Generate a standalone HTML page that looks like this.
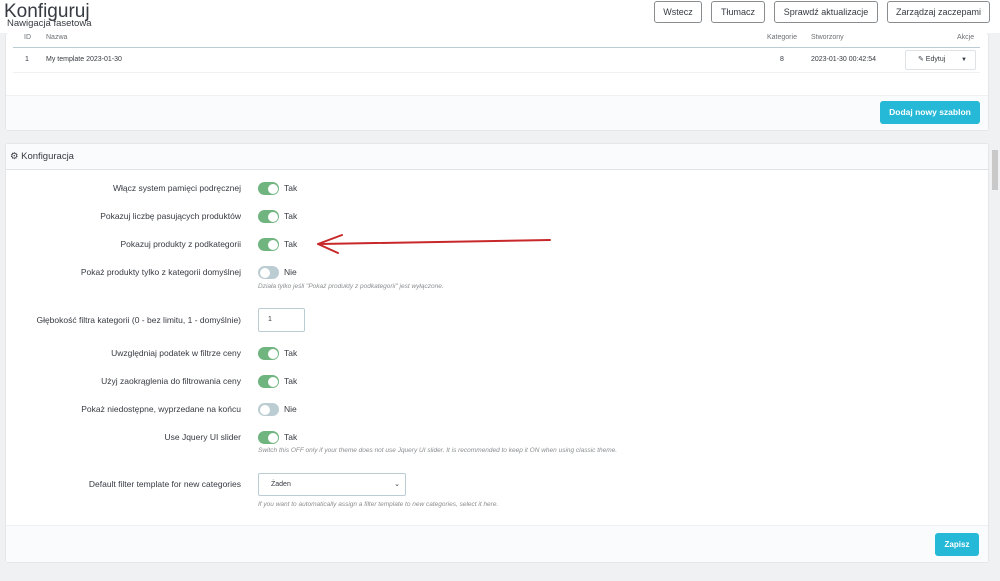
<!DOCTYPE html>
<html><head><meta charset="utf-8"><style>
*{box-sizing:border-box;margin:0;padding:0}
body{width:1000px;height:581px;background:#eff1f2;font-family:"Liberation Sans",sans-serif;color:#363a41;position:relative;overflow:hidden;font-size:8px}
.abs{position:absolute}
.hdr{left:0;top:0;width:1000px;height:33px;background:#fff}
.btn{position:absolute;top:1px;height:22px;border:1px solid #8a8d90;border-radius:3px;background:#fff;font-size:9px;color:#363a41;text-align:center;line-height:20px}
.panel{background:#fff;border:1px solid #e4e6e8;border-radius:3px;position:absolute}
.lbl{position:absolute;right:759px;font-size:8.5px;color:#363a41;white-space:nowrap}
.tg{position:absolute;left:258px;width:21px;height:13px;border-radius:7px;background:#70b580}
.tg::after{content:"";position:absolute;top:1.5px;right:1.5px;width:10px;height:10px;border-radius:50%;background:#fff}
.tg.off{background:#bbcdd2}
.tg.off::after{left:1.5px;right:auto}
.tv{position:absolute;left:284px;font-size:8.5px}
.help{position:absolute;left:258px;font-size:6.5px;font-style:italic;color:#8a8d90;white-space:nowrap}
.th{position:absolute;top:34px;font-size:7px;color:#6c6f73}
</style></head><body>
<div class="abs hdr"></div>
<div class="abs" style="left:4px;top:1px;font-size:19px;color:#363a41">Konfiguruj</div>
<div class="abs" style="left:7px;top:18px;font-size:9.5px;color:#363a41">Nawigacja fasetowa</div>
<div class="btn" style="left:654px;width:48px">Wstecz</div>
<div class="btn" style="left:711px;width:54px">Tłumacz</div>
<div class="btn" style="left:774px;width:104px">Sprawdź aktualizacje</div>
<div class="btn" style="left:887px;width:103px">Zarządzaj zaczepami</div>

<div class="panel" style="left:5px;top:33px;width:984px;height:98px;border-top:none"></div>
<div class="abs" style="left:6px;top:95px;width:982px;height:35px;background:#fafbfc;border-top:1px solid #eef0f1"></div>
<div class="th" style="left:24px">ID</div>
<div class="th" style="left:46px">Nazwa</div>
<div class="th" style="left:767px">Kategorie</div>
<div class="th" style="left:811px">Stworzony</div>
<div class="th" style="left:957px">Akcje</div>
<div class="abs" style="left:13px;top:47px;width:967px;height:1px;background:#bbcdd2"></div>
<div class="abs" style="left:25px;top:56px;font-size:7px">1</div>
<div class="abs" style="left:46px;top:56px;font-size:7px">My template 2023-01-30</div>
<div class="abs" style="left:780px;top:56px;font-size:7px">8</div>
<div class="abs" style="left:811px;top:56px;font-size:7px">2023-01-30 00:42:54</div>
<div class="abs" style="left:905px;top:50px;width:71px;height:20px;border:1px solid #dfe3e5;border-radius:2px;background:#fff;font-size:7px;line-height:18px;padding-left:12px">✎ Edytuj <span style="position:absolute;right:8px;font-size:6px">▼</span></div>
<div class="abs" style="left:13px;top:72px;width:967px;height:1px;background:#eef0f1"></div>
<div class="abs" style="left:880px;top:101px;width:100px;height:23px;background:#25b9d7;border-radius:3px;color:#fff;font-size:8.5px;font-weight:bold;text-align:center;line-height:23px">Dodaj nowy szablon</div>

<div class="panel" style="left:5px;top:143px;width:984px;height:420px"></div>
<div class="abs" style="left:6px;top:144px;width:982px;height:26px;background:#fafbfc;border-bottom:1px solid #dfe3e5"></div>
<div class="abs" style="left:10px;top:151px;font-size:9.5px">⚙ Konfiguracja</div>
<div class="abs" style="left:992px;top:150px;width:6px;height:40px;background:#c9c9c9"></div>

<div class="lbl" style="top:183px">Włącz system pamięci podręcznej</div><div class="tg" style="top:182px"></div><div class="tv" style="top:183px">Tak</div>
<div class="lbl" style="top:211px">Pokazuj liczbę pasujących produktów</div><div class="tg" style="top:210px"></div><div class="tv" style="top:211px">Tak</div>
<div class="lbl" style="top:239px">Pokazuj produkty z podkategorii</div><div class="tg" style="top:238px"></div><div class="tv" style="top:239px">Tak</div>
<div class="lbl" style="top:267px">Pokaż produkty tylko z kategorii domyślnej</div><div class="tg off" style="top:266px"></div><div class="tv" style="top:267px">Nie</div>
<div class="help" style="top:283px">Działa tylko jeśli "Pokaż produkty z podkategorii" jest wyłączone.</div>
<div class="lbl" style="top:315px">Głębokość filtra kategorii (0 - bez limitu, 1 - domyślnie)</div>
<div class="abs" style="left:258px;top:308px;width:47px;height:24px;border:1px solid #bbcdd2;border-radius:2px;font-size:7px;padding:7px 0 0 9px">1</div>
<div class="lbl" style="top:348px">Uwzględniaj podatek w filtrze ceny</div><div class="tg" style="top:347px"></div><div class="tv" style="top:348px">Tak</div>
<div class="lbl" style="top:376px">Użyj zaokrąglenia do filtrowania ceny</div><div class="tg" style="top:375px"></div><div class="tv" style="top:376px">Tak</div>
<div class="lbl" style="top:404px">Pokaż niedostępne, wyprzedane na końcu</div><div class="tg off" style="top:403px"></div><div class="tv" style="top:404px">Nie</div>
<div class="lbl" style="top:432px">Use Jquery UI slider</div><div class="tg" style="top:431px"></div><div class="tv" style="top:432px">Tak</div>
<div class="help" style="top:447px">Switch this OFF only if your theme does not use Jquery UI slider. It is recommended to keep it ON when using classic theme.</div>
<div class="lbl" style="top:479px">Default filter template for new categories</div>
<div class="abs" style="left:258px;top:473px;width:148px;height:23px;border:1px solid #bbcdd2;border-radius:2px;font-size:7px;padding:7px 0 0 12px">Żaden<span style="position:absolute;right:5px;top:6px;font-size:7px">⌄</span></div>
<div class="help" style="top:501px">If you want to automatically assign a filter template to new categories, select it here.</div>
<div class="abs" style="left:6px;top:525px;width:982px;height:37px;background:#fafbfc;border-top:1px solid #eef0f1"></div>
<div class="abs" style="left:935px;top:533px;width:44px;height:23px;background:#25b9d7;border-radius:3px;color:#fff;font-size:8px;font-weight:bold;text-align:center;line-height:23px">Zapisz</div>

<svg class="abs" style="left:0;top:0" width="1000" height="581"><path d="M550 240 L320 244 M318 244 L342 235 M318 244 L338 253" stroke="#c8282a" stroke-width="2" fill="none" stroke-linecap="round"/></svg>
</body></html>
